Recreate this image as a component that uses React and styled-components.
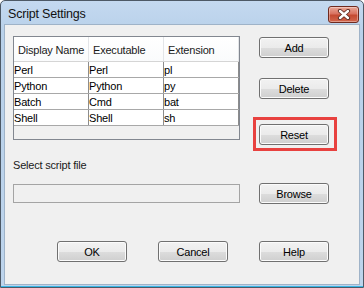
import React from 'react';
import styled, { createGlobalStyle } from 'styled-components';

const GlobalStyle = createGlobalStyle`
    html, body {
        margin: 0;
        padding: 0;
        background: #ffffff;
    }
    * {
        box-sizing: border-box;
    }
`;

const Window = styled.div`
    width: 364px;
    height: 288px;
    display: flex;
    flex-direction: column;
    background: linear-gradient(#c4d9f0, #b9d1ea 30px, #bdd4ec);
    border: 1px solid #4d5966;
    border-radius: 5px 5px 0 0;
    padding: 0 3px 2px 3px;
    font-family: "Liberation Sans", Arial, sans-serif;
    font-size: 11px;
    letter-spacing: -0.2px;
    color: #000;
    box-shadow: inset 0 -1px 0 #39b6e6;
`;

const TitleBar = styled.div`
    height: 23px;
    display: flex;
    align-items: center;
    justify-content: space-between;
    padding: 0 0 0 4px;
`;

const Title = styled.span`
    font-size: 12.5px;
    letter-spacing: -0.2px;
    color: #111;
    margin-top: 2px;
`;

const CloseButton = styled.div`
    width: 31px;
    height: 17px;
    margin-top: 3px;
    margin-right: 1px;
    border: 1px solid #6f2a1f;
    border-radius: 3px;
    background: linear-gradient(#e9a898, #d97260 45%, #c44a32 55%, #d2664c);
    box-shadow: inset 0 0 0 1px rgba(255, 255, 255, 0.35);
    display: flex;
    align-items: center;
    justify-content: center;
`;

const Client = styled.div`
    flex: 1;
    background: #f0f0f0;
    border: 1px solid #9fb3c8;
    display: flex;
    flex-direction: column;
    padding: 11px 0 0 8px;
`;

const TopRow = styled.div`
    display: flex;
    align-items: flex-start;
`;

const Table = styled.div`
    width: 227px;
    height: 104px;
    border: 1px solid #828790;
    background: #f0f0f0;
    display: flex;
    flex-direction: column;
`;

const HeaderRow = styled.div`
    display: flex;
    height: 25px;
    background: linear-gradient(#ffffff, #fafbfc);
    border-bottom: 1px solid #d5d5d5;
`;

const HeaderCell = styled.div`
    width: 75px;
    display: flex;
    align-items: center;
    padding: 1px 0 0 4px;
    border-right: 1px solid #e3e5e8;
    color: #1a1a1a;
    white-space: nowrap;
`;

const DataRow = styled.div`
    display: flex;
    height: 16px;
    background: #ffffff;
    border-bottom: 1px solid #a8a8a8;
`;

const DataCell = styled.div`
    width: 75px;
    display: flex;
    align-items: center;
    padding-left: 0;
    border-right: 1px solid #8c8c8c;
    white-space: nowrap;
`;

const ButtonColumn = styled.div`
    display: flex;
    flex-direction: column;
    margin-left: 19px;
    padding-top: 1px;
`;

const Button = styled.button`
    width: 70px;
    height: 21px;
    padding: 0;
    margin: 0;
    margin-top: ${p => p.gap || 0}px;
    margin-left: ${p => p.indent || 0}px;
    font-family: "Liberation Sans", Arial, sans-serif;
    font-size: 11px;
    letter-spacing: -0.2px;
    color: #000;
    border: 1px solid #707070;
    border-radius: 3px;
    background: linear-gradient(#f2f2f2, #ebebeb 50%, #dddddd 51%, #cfcfcf);
    box-shadow: inset 0 0 0 1px #fbfbfb;
    cursor: default;
`;

const Highlight = styled.div`
    position: relative;
    margin-top: 25px;

    &::after {
        content: '';
        position: absolute;
        left: -6px;
        top: -7px;
        right: -8px;
        bottom: -6px;
        border: 3px solid #e8413f;
        pointer-events: none;
    }
`;

const Label = styled.div`
    margin-top: 13px;
    height: 14px;
    line-height: 14px;
    color: #1a1a1a;
`;

const FileRow = styled.div`
    display: flex;
    align-items: center;
    margin-top: 11px;
    height: 21px;
`;

const FileInput = styled.div`
    width: 227px;
    height: 19px;
    border: 1px solid #a4a4a4;
    background: #f0f0f0;
`;

const BottomRow = styled.div`
    display: flex;
    gap: 31px;
    margin-top: 37px;
    padding-left: 44px;
`;

const columns = ['Display Name', 'Executable', 'Extension'];

const scripts = [
    ['Perl', 'Perl', 'pl'],
    ['Python', 'Python', 'py'],
    ['Batch', 'Cmd', 'bat'],
    ['Shell', 'Shell', 'sh'],
];

const CloseIcon = () => (
    <svg width="14" height="11" viewBox="0 0 14 11">
        <path d="M3 2 L11 9 M11 2 L3 9" stroke="#5a2a22" strokeWidth="4.2" strokeLinecap="round" />
        <path d="M3 2 L11 9 M11 2 L3 9" stroke="#ffffff" strokeWidth="2.4" strokeLinecap="round" />
    </svg>
);

const App = () => {
    return (
        <>
            <GlobalStyle />
            <Window>
                <TitleBar>
                    <Title>Script Settings</Title>
                    <CloseButton><CloseIcon /></CloseButton>
                </TitleBar>
                <Client>
                    <TopRow>
                        <Table>
                            <HeaderRow>
                                {columns.map(c => <HeaderCell key={c}>{c}</HeaderCell>)}
                            </HeaderRow>
                            {scripts.map(row => (
                                <DataRow key={row[0]}>
                                    {row.map((v, i) => <DataCell key={i}>{v}</DataCell>)}
                                </DataRow>
                            ))}
                        </Table>
                        <ButtonColumn>
                            <Button>Add</Button>
                            <Button gap={20}>Delete</Button>
                            <Highlight>
                                <Button>Reset</Button>
                            </Highlight>
                        </ButtonColumn>
                    </TopRow>
                    <Label>Select script file</Label>
                    <FileRow>
                        <FileInput />
                        <Button indent={19}>Browse</Button>
                    </FileRow>
                    <BottomRow>
                        <Button>OK</Button>
                        <Button>Cancel</Button>
                        <Button>Help</Button>
                    </BottomRow>
                </Client>
            </Window>
        </>
    );
};

export default App;
